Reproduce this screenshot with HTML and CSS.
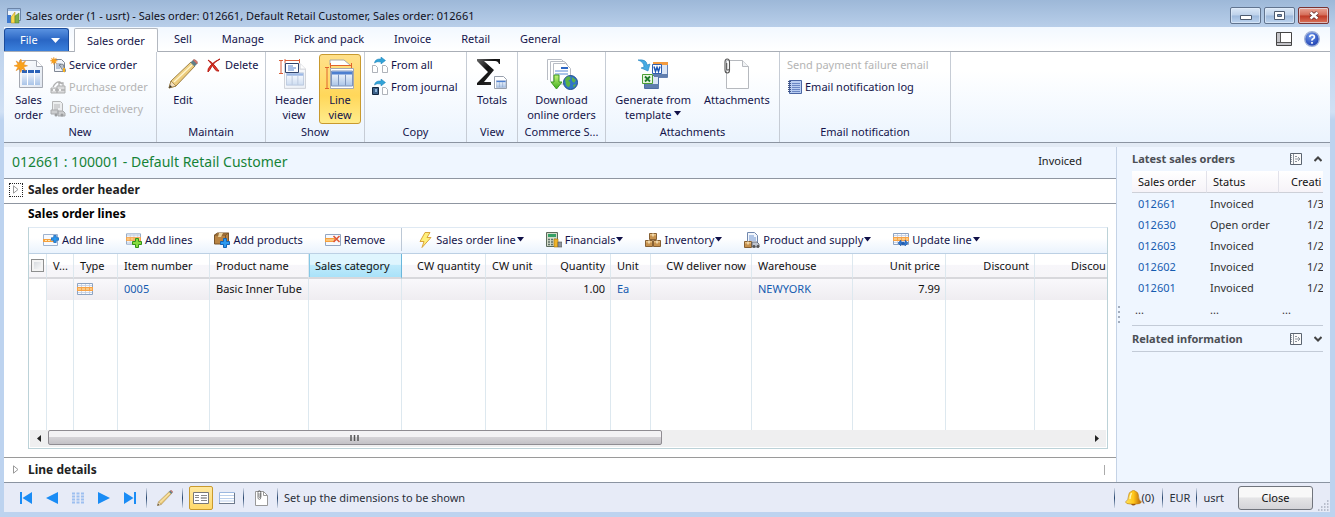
FILE: index.html
```html
<!DOCTYPE html>
<html lang="en">
<head>
<meta charset="utf-8">
<title>Sales order</title>
<link rel="stylesheet" href="styles.css">
</head>
<body>
<svg class="defs" aria-hidden="true">
  <defs>
    <linearGradient id="g-sheet" x1="0" y1="0" x2="1" y2="1"><stop offset="0" stop-color="#fff"/><stop offset="1" stop-color="#dfe6f0"/></linearGradient>
    <linearGradient id="g-cell" x1="0" y1="0" x2="0" y2="1"><stop offset="0" stop-color="#fff"/><stop offset="1" stop-color="#a9c4e8"/></linearGradient>
    <linearGradient id="g-pencil" x1="0" y1="0" x2="1" y2="1"><stop offset="0" stop-color="#fdf0b4"/><stop offset="1" stop-color="#dfae50"/></linearGradient>
    <linearGradient id="g-green" x1="0" y1="0" x2="0" y2="1"><stop offset="0" stop-color="#c4f47a"/><stop offset="1" stop-color="#3fae1d"/></linearGradient>
    <radialGradient id="g-help" cx=".4" cy=".3" r=".8"><stop offset="0" stop-color="#6f98ec"/><stop offset="1" stop-color="#1233a8"/></radialGradient>
    <linearGradient id="g-bell" x1="0" y1="0" x2="1" y2="0"><stop offset="0" stop-color="#ffe45a"/><stop offset=".5" stop-color="#ffc61a"/><stop offset="1" stop-color="#b45f0a"/></linearGradient>
    <linearGradient id="g-sigma" x1="0" y1="0" x2="1" y2="1"><stop offset="0" stop-color="#666"/><stop offset=".4" stop-color="#111"/><stop offset="1" stop-color="#333"/></linearGradient>
    <path id="star" d="M8 0l1.400 4.600L13.600 2.300 11.400 6.500 16 8l-4.600 1.500 2.200 4.200-4.200-2.300L8 16l-1.400-4.600-4.200 2.300 2.200-4.200L0 8l4.600-1.500L2.400 2.300l4.200 2.300z" fill="#f9a21b" stroke="#e27d0c" stroke-width=".5"/>
    <symbol id="i-sheet" viewBox="0 0 24 28">
      <path d="M.5.5h17l6 6v21H.5z" fill="url(#g-sheet)" stroke="#a5a9b2"/>
      <path d="M17.500.5v6h6" fill="#fff" stroke="#a5a9b2"/>
    </symbol>
    <symbol id="i-grid" viewBox="0 0 22 16">
      <path d="M.5.5h21v15H.5z" fill="url(#g-cell)" stroke="#7e95bd"/>
      <path d="M1 1h20v3H1z" fill="#4d7fd0"/><path d="M7.500 4v11M14.500 4v11" stroke="#7e95bd"/>
    </symbol>
    <symbol id="i-pencil" viewBox="0 0 30 30">
      <path d="M1 29l2-7L23 3l4 4L8 27z" fill="url(#g-pencil)" stroke="#8a6a2a" stroke-width=".8"/>
      <path d="M6 23L24 6" stroke="#fff6d2" stroke-width="1.200"/>
      <path d="M1 29l2-7 5 5z" fill="#f2dfbd" stroke="#8a6a2a" stroke-width=".6"/><path d="M1 29l1-3 2 2z" fill="#333"/>
      <path d="M22.500 3.500L25 1l4 4-2.500 2.500z" fill="#5f7f88"/><path d="M25 1q1-1 2.500 0L29 2.500Q30 4 29 5z" fill="#d8766b" stroke="#8c4a45" stroke-width=".5"/>
    </symbol>
    <symbol id="i-rows" viewBox="0 0 16 12">
      <path d="M.5.5h15v11H.5z" fill="#f8fafd" stroke="#8ca3c2"/>
      <path d="M4.500 1v10M8.500 1v10M12.500 1v10M1 2.500h14M1 9.500h14" stroke="#c0ccdf" stroke-width=".8"/>
      <path d="M0 4h16v4H0z" fill="#f7a348"/><path d="M1 6h14" stroke="#fff0c0" stroke-dasharray="3 1"/>
    </symbol>
    <symbol id="i-plus" viewBox="0 0 10 10"><path d="M3.500.5h3v3h3v3h-3v3h-3v-3h-3v-3h3z" fill="#2b9af0" stroke="#1663b5"/></symbol>
    <symbol id="i-box" viewBox="0 0 8 7"><path d="M.5.5h7v6h-7z" fill="#c6924f" stroke="#876033"/><path d="M1 1h6v1.500H1z" fill="#e8c083"/><path d="M4 .5v3" stroke="#f4e1b9" stroke-width="1.500"/></symbol>
    <symbol id="i-clip" viewBox="0 0 7 16"><path d="M5.500 4v8q0 3-2.200 3T1 12V4q0-3 2.200-3 2.300 0 2.300 3v6.500q0 1.500-1.500 1.500T2.700 10.500V5" fill="none" stroke="#555" stroke-width="1.100"/></symbol>
    <symbol id="i-note" viewBox="0 0 12 12"><path d="M.5.500h11v11H.500z" fill="#fbfbfb" stroke="#5b6470"/><path d="M3.500 1v10" stroke="#8b929b"/><path d="M1.500 2v8" stroke="#9aa4b0" stroke-dasharray="1 1"/><path d="M5 6h4M8 4l2 2-2 2M5 3.500h2M5 8.500h2" fill="none" stroke="#8b929b"/></symbol>
    <symbol id="i-copyarrow" viewBox="0 0 12 7"><path d="M.5 6Q1 1.500 7 2V0l4.500 3.500L7 7V5Q3 4 .5 6z" fill="#31a3d8" stroke="#1d7fb4" stroke-width=".5"/></symbol>
    <symbol id="i-page" viewBox="0 0 6 8"><path d="M.5.500h3l2 2v5h-5z" fill="#fff" stroke="#9aa0a8" stroke-width=".8"/></symbol>
    <symbol id="i-down" viewBox="0 0 7 5"><path d="M0 0h7L3.500 4.500z" fill="#101048"/></symbol>
  </defs>
</svg>

<div class="window">
  <header class="titlebar">
    <svg class="appicon" width="16" height="16" viewBox="0 0 16 16"><path d="M1.500.500h13v12h-13z" fill="#eef4fb" stroke="#6b84a8"/><path d="M2 1h12v2H2z" fill="#9cbce4"/><path d="M1 7h4v8H1z" fill="#3c78cf"/><path d="M5 9l4-5v11H5z" fill="#f9d84e" stroke="#a8841a" stroke-width=".5"/><path d="M9 8l4-3v10H9z" fill="#7fb04a" stroke="#4c7a2a" stroke-width=".5"/></svg>
    <h1 class="caption">Sales order (1 - usrt) - Sales order: 012661, Default Retail Customer, Sales order: 012661</h1>
    <div class="winbtns">
      <button class="winbtn" aria-label="Minimize"><svg width="12" height="9" viewBox="0 0 12 9"><path d="M.500 4.500h11v4H.500z" fill="#fff" stroke="#4d5b70"/></svg></button>
      <button class="winbtn" aria-label="Maximize"><svg width="11" height="9" viewBox="0 0 11 9"><path d="M.500.500h10v8H.500z" fill="#fff" stroke="#4d5b70"/><path d="M3.500 3.500h4v2h-4z" fill="#7e9cc4" stroke="#4d5b70"/></svg></button>
      <button class="winbtn winbtn-close" aria-label="Close window"><svg width="12" height="9" viewBox="0 0 12 9"><path d="M2.500 1.500l7 6M9.500 1.500l-7 6" stroke="#5c2a2a" stroke-width="4"/><path d="M2.500 1.500l7 6M9.500 1.500l-7 6" stroke="#fff" stroke-width="2.400"/></svg></button>
    </div>
  </header>

  <nav class="tabs">
    <button class="file">File<svg width="9" height="5" viewBox="0 0 9 5"><path d="M0 0h9L4.500 5z" fill="#fff"/></svg></button>
    <button class="tab tab-on">Sales order</button>
    <button class="tab">Sell</button>
    <button class="tab">Manage</button>
    <button class="tab">Pick and pack</button>
    <button class="tab">Invoice</button>
    <button class="tab">Retail</button>
    <button class="tab">General</button>
    <div class="tabtools">
      <button class="plain" aria-label="View layout"><svg width="16" height="14" viewBox="0 0 16 14"><path d="M.500.500h15v13H.500z" fill="#fff" stroke="#444"/><path d="M1 1h3v9H1zM1 10h14v3H1z" fill="#c3c3c8"/><path d="M4.500 1v9M1 10.500h14" stroke="#555"/></svg></button>
      <button class="plain" aria-label="Help"><svg width="16" height="16" viewBox="0 0 16 16"><circle cx="8" cy="8" r="7.300" fill="url(#g-help)" stroke="#9fb0d8" stroke-width="1.400"/><path d="M5.700 6.200Q5.900 4 8.100 4t2.300 2q0 1.200-1.300 1.800T8 9.600M8 11v1.700" fill="none" stroke="#fff" stroke-width="1.700"/></svg></button>
    </div>
  </nav>

  <div class="ribbon">
    <section class="group g-new">
      <div class="tools">
        <button class="big big-narrow"><svg width="30" height="32" viewBox="0 0 30 32"><use href="#i-sheet" x="5" y="1" width="24" height="30"/><path d="M8 12h18v15H8z" fill="url(#g-cell)"/><path d="M8 12h18v3H8z" fill="#2a62b8"/><path d="M13.500 12v15M20.500 12v15" stroke="#fff"/><use href="#star" transform="translate(0 1) scale(.85)"/></svg>Sales<br>order</button>
        <div class="stack">
          <button class="small"><svg width="16" height="16" viewBox="0 0 16 16"><path d="M4.500 2.500h7l3 3v9h-10z" fill="#f2f5fa" stroke="#7f8794"/><path d="M6 7h5M6 9h5M6 11h4" stroke="#7d91b5"/><path d="M9 8q2 1 2 3l3 4 2-1-2-4q0-3-2-3z" fill="#b9c0c9" stroke="#5c6470" stroke-width=".7"/><path d="M13 11v4h2v-4z" fill="#f3ae20"/><use href="#star" transform="scale(.48)"/></svg>Service order</button>
          <button class="small" disabled><svg width="16" height="16" viewBox="0 0 16 16"><path d="M1 9h6v5H1zM7 7h8v7H7z" fill="#cdcdcd" stroke="#8f8f8f"/><path d="M3 8q3-6 7-5l2 2M9 7V4h4v3M1 11h14" fill="none" stroke="#8f8f8f" stroke-width="1.300"/><path d="M4 10v2M10 10v2" stroke="#f4f4f4" stroke-width="2"/></svg>Purchase order</button>
          <button class="small" disabled><svg width="16" height="16" viewBox="0 0 16 16"><path d="M2.500.500h8l2 2v10h-10z" fill="#e9e9e9" stroke="#999"/><path d="M4 4h6M4 6h6M4 8h4" stroke="#999"/><path d="M1 9h7v4H1zM8 10h5l2 2v3H8z" fill="#bcbcbc" stroke="#888"/><circle cx="6" cy="14" r="1.500" fill="#777"/><circle cx="12" cy="14" r="1.500" fill="#777"/></svg>Direct delivery</button>
        </div>
      </div>
      <h2 class="glabel">New</h2>
    </section>
    <section class="group g-maintain">
      <div class="tools">
        <button class="big big-edit"><svg width="32" height="32" viewBox="0 0 32 32"><use href="#i-pencil" x="1" y="1" width="30" height="30"/></svg>Edit</button>
        <div class="stack">
          <button class="small"><svg width="16" height="16" viewBox="0 0 16 16"><path d="M2 3q4 2 7 6t4 5q-3 1-5-3T2 3zM14 2Q8 5 6 9t-4 6q-1-3 3-7t9-6z" fill="#e23a2c" stroke="#b91f16" stroke-width="1"/></svg>Delete</button>
        </div>
      </div>
      <h2 class="glabel">Maintain</h2>
    </section>
    <section class="group g-show">
      <div class="tools">
        <button class="big big-mid"><svg width="32" height="32" viewBox="0 0 32 32"><g opacity=".55"><use href="#i-sheet" x="6" y="5" width="22" height="26"/><use href="#i-grid" x="8" y="14" width="18" height="14"/></g><path d="M7.500 5.500h13v9h-13z" fill="#fff" stroke="#31446b"/><path d="M10 8h5M10 10h8M10 12h6" stroke="#5583cf"/><path d="M3 2v14M1 2.500h4M1 15.500h4M7 2.500h15M21.500 1v4M7 1v4" stroke="#d9613b"/></svg>Header<br>view</button>
        <button class="big big-on"><svg width="32" height="32" viewBox="0 0 32 32"><path d="M6 7V2h14l6 5" fill="#fff" stroke="#a9a9a9"/><path d="M6.500 10.500h23v20h-23z" fill="#fff" stroke="#a5a9b2"/><use href="#i-grid" x="7" y="12" width="22" height="17"/><path d="M3 9v22M1 9.500h4M1 30.500h4M6 7.500h22M6.500 5v5M27.500 5v5" stroke="#e0642d"/></svg>Line<br>view</button>
      </div>
      <h2 class="glabel">Show</h2>
    </section>
    <section class="group g-copy">
      <div class="tools">
        <div class="stack">
          <button class="small"><svg width="16" height="16" viewBox="0 0 16 16"><use href="#i-copyarrow" x="2" y="0" width="12" height="7"/><use href="#i-page" x="0" y="8" width="6" height="8"/><use href="#i-page" x="10" y="8" width="6" height="8"/></svg>From all</button>
          <button class="small"><svg width="16" height="16" viewBox="0 0 16 16"><use href="#i-copyarrow" x="2" y="0" width="12" height="7"/><path d="M.500 8.500h6v7h-6z" fill="#3d6189" stroke="#12263f"/><path d="M3 10h2v3H3z" fill="#8eb4d8"/><use href="#i-page" x="10" y="8" width="6" height="8"/></svg>From journal</button>
        </div>
      </div>
      <h2 class="glabel">Copy</h2>
    </section>
    <section class="group g-view">
      <div class="tools">
        <button class="big big-mid"><svg width="32" height="32" viewBox="0 0 32 32"><path d="M1 1h23v5h-1q-1-3-4-3H8l10 9L8 24h7v3H1v-2L12 14 1 3z" fill="url(#g-sigma)"/><path d="M18.500 18.500h9l3 3v9h-12z" fill="#fff" stroke="#98a0ad"/><use href="#i-grid" x="20" y="22" width="10" height="8"/></svg>Totals</button>
      </div>
      <h2 class="glabel">View</h2>
    </section>
    <section class="group g-commerce">
      <div class="tools">
        <button class="big"><svg width="32" height="32" viewBox="0 0 32 32"><path d="M1.500 22V1.500h14l3 3M4.500 24V3.500h14l3 3M7.500 26V5.500h12l5 5V26z" fill="#fff" stroke="#b8bcc4"/><path d="M9 13h13M9 16h13" stroke="#5b8ad6"/><path d="M15 9h7v2h-7z" fill="#2c66c4"/><path d="M8 17h5v7h3l-5.500 7L5 24h3z" fill="url(#g-green)" stroke="#3e9a22"/><circle cx="24.500" cy="24.500" r="7" fill="#3175c6" stroke="#1f4d8c"/><path d="M19 21q3-4 5-2t-2 4q3 0 2 4t-4 0zM26 19l4 3-2 3-2-2zM27 27l3-1-2 4z" fill="#5bb347"/></svg>Download<br>online orders</button>
      </div>
      <h2 class="glabel">Commerce S...</h2>
    </section>
    <section class="group g-attach">
      <div class="tools">
        <button class="big"><svg width="32" height="32" viewBox="0 0 32 32"><path d="M1 2q9-1 9 5l3-1-2 7-7-3 3-1Q7 4 1 2z" fill="#45aae2" stroke="#2382bd" stroke-width=".6"/><path d="M16.500 5.500h14v14h-14z" fill="#dbe6f6" stroke="#6682b3"/><path d="M16 4h15v3H16z" fill="#f39a3d"/><path d="M7.500 17.500h14v13h-14z" fill="#dbe6f6" stroke="#4e6da4"/><path d="M8 26h14v4H8zM17 16h14v3H17z" fill="#607eae"/><path d="M15.500 6.500h9v9h-9z" fill="#fff" stroke="#315fae"/><path d="M17 8.500l1.500 5 1.500-4 1.500 4 1.500-5" fill="none" stroke="#1b55b5" stroke-width="1.500"/><path d="M5.500 16.500h10v9h-10z" fill="#e9f7df" stroke="#4d9f35"/><path d="M8 18.500l5 5M13 18.500l-5 5" stroke="#207b2d" stroke-width="1.800"/></svg>Generate from<br><span>template <svg class="caret" width="7" height="5"><use href="#i-down"/></svg></span></button>
        <button class="big"><svg width="32" height="32" viewBox="0 0 32 32"><path d="M5.500 2.500h16l6 6v22h-22z" fill="#fff" stroke="#b6b9be"/><path d="M21.500 2.500v6h6" fill="#f1f3f5" stroke="#b6b9be"/><use href="#i-clip" x="3" y="0" width="7" height="16"/></svg>Attachments</button>
      </div>
      <h2 class="glabel">Attachments</h2>
    </section>
    <section class="group g-email">
      <div class="tools">
        <div class="stack">
          <button class="small" disabled>Send payment failure email</button>
          <button class="small"><svg width="15" height="16" viewBox="0 0 15 16"><path d="M2.500 1.500h12v13h-12z" fill="#b9cdf1" stroke="#4b66a5"/><path d="M5 4.500h8M5 6.500h8M5 8.500h8M5 10.500h8M5 12.500h8" stroke="#6b87c4"/><path d="M2.500 2v12" stroke="#3e5385" stroke-width="3" stroke-dasharray="1 1"/></svg>Email notification log</button>
        </div>
      </div>
      <h2 class="glabel">Email notification</h2>
    </section>
  </div>

  <div class="body">
    <main class="main">
      <div class="record">
        <h2 class="recname">012661 : 100001 - Default Retail Customer</h2>
        <span class="recstatus">Invoiced</span>
      </div>
      <button class="fasttab"><span class="twist twist-focus"><svg width="6" height="9" viewBox="0 0 6 9"><path d="M.500.800v7.400L5 4.500z" fill="#fff" stroke="#999"/></svg></span>Sales order header</button>
      <h3 class="linestitle">Sales order lines</h3>
      <div class="grid">
        <div class="gridbar">
          <button class="gb"><svg width="16" height="14" viewBox="0 0 16 14"><path d="M.500 1.500h14v11H.500z" fill="#f6f9fe" stroke="#9db2cf"/><path d="M0 6h12v3H0z" fill="#f6a13d"/><path d="M2 7.500h8" stroke="#ffe9b8" stroke-dasharray="2 1"/><use href="#i-plus" x="8" y="2" width="8" height="8"/></svg>Add line</button>
          <button class="gb"><svg width="16" height="16" viewBox="0 0 16 16"><use href="#i-rows" x="0" y="1" width="15" height="12"/><path d="M9.500 6.500h3v3h3v3h-3v3h-3v-3h-3v-3h3z" fill="#86dc3f" stroke="#329318"/></svg>Add lines</button>
          <button class="gb"><svg width="16" height="16" viewBox="0 0 16 16"><path d="M.500 3l3-2h11v9l-3 2h-11z" fill="#b98443" stroke="#79552b"/><path d="M.500 3h11l3-2M11.500 3v8" fill="none" stroke="#79552b"/><path d="M5 1l-1 4h3l2-4z" fill="#ecd3a0"/><use href="#i-plus" x="6" y="6" width="10" height="10"/></svg>Add products</button>
          <button class="gb"><svg width="16" height="14" viewBox="0 0 16 14"><path d="M.500 1.500h15v11H.500z" fill="#f6f9fe" stroke="#93a6c2"/><path d="M0 5h10v4H0z" fill="#f6a13d"/><path d="M1 7h8" stroke="#ffe9b8"/><path d="M8.500 3l6 6M14.500 3l-6 6" stroke="#df5638" stroke-width="1.600"/></svg>Remove</button>
          <span class="gbsep"></span>
          <button class="gb"><svg width="15" height="16" viewBox="0 0 15 16"><path d="M7 .500h5L9 5.500h4L4 15.500l2-6H2z" fill="#fff07a" stroke="#d9a53c"/></svg>Sales order line<svg class="caret" width="7" height="5"><use href="#i-down"/></svg></button>
          <button class="gb"><svg width="16" height="16" viewBox="0 0 16 16"><path d="M.500.500h11v14H.500z" fill="#d3dbc9" stroke="#5c6b5c"/><path d="M2 2h8v3H2z" fill="#35a066"/><path d="M2 7.500h8M2 10h8M2 12.500h6" stroke="#5f6f68" stroke-width="1.500" stroke-dasharray="2 1"/><path d="M8 7h4v8H8z" fill="#f0b429" stroke="#9c6e10" stroke-width=".6"/><path d="M12 10h4v5h-4z" fill="#8d949d" stroke="#555" stroke-width=".6"/></svg>Financials<svg class="caret" width="7" height="5"><use href="#i-down"/></svg></button>
          <button class="gb"><svg width="16" height="16" viewBox="0 0 16 16"><use href="#i-box" x="4" y="1" width="8" height="7"/><use href="#i-box" x="0" y="8" width="8" height="7"/><use href="#i-box" x="8" y="8" width="8" height="7"/></svg>Inventory<svg class="caret" width="7" height="5"><use href="#i-down"/></svg></button>
          <button class="gb"><svg width="16" height="16" viewBox="0 0 16 16"><path d="M3.500.500h7l3 3v9h-10z" fill="#f2f6fc" stroke="#7188ae"/><path d="M5 4h5M5 6h7M5 8h7" stroke="#6f94cf"/><use href="#i-box" x="0" y="9" width="8" height="7"/><path d="M8 10h5l2 2v3H8z" fill="#bfc5cf" stroke="#5b6370" stroke-width=".8"/><circle cx="10" cy="14.500" r="1.400" fill="#555"/><circle cx="14" cy="14.500" r="1.400" fill="#555"/></svg>Product and supply<svg class="caret" width="7" height="5"><use href="#i-down"/></svg></button>
          <button class="gb"><svg width="16" height="14" viewBox="0 0 16 14"><use href="#i-rows" x="0" y="0" width="16" height="12"/><path d="M5 10l3-3v2h3v2H8v2zM15 10l-3 3v-1H9v-2h3V7z" fill="#2f77cf" stroke="#1c4f98" stroke-width=".5"/></svg>Update line<svg class="caret" width="7" height="5"><use href="#i-down"/></svg></button>
        </div>
        <div class="gridview">
          <table class="lines">
            <colgroup><col class="c-check"><col class="c-v"><col class="c-type"><col class="c-item"><col class="c-name"><col class="c-cat"><col class="c-cwq"><col class="c-cwu"><col class="c-qty"><col class="c-unit"><col class="c-cwd"><col class="c-wh"><col class="c-price"><col class="c-disc"><col class="c-last"></colgroup>
            <thead>
              <tr><th class="ctr"><input type="checkbox" class="check" aria-label="Select all lines"></th><th>V...</th><th>Type</th><th>Item number</th><th>Product name</th><th class="hot">Sales category</th><th class="num">CW quantity</th><th>CW unit</th><th class="num">Quantity</th><th>Unit</th><th class="num">CW deliver now</th><th>Warehouse</th><th class="num">Unit price</th><th class="num">Discount</th><th class="cut">Discou</th></tr>
            </thead>
            <tbody>
              <tr class="line"><td class="blank"></td><td></td><td class="typecell"><svg width="16" height="12"><use href="#i-rows"/></svg></td><td><a href="#item">0005</a></td><td>Basic Inner Tube</td><td></td><td></td><td></td><td class="num">1.00</td><td><a href="#unit">Ea</a></td><td></td><td><a href="#warehouse">NEWYORK</a></td><td class="num">7.99</td><td></td><td></td></tr>
              <tr class="rest"><td></td><td></td><td></td><td></td><td></td><td></td><td></td><td></td><td></td><td></td><td></td><td></td><td></td><td></td><td></td></tr>
            </tbody>
          </table>
        </div>
        <div class="scroll">
          <button class="scrollbtn" aria-label="Scroll left"><svg width="4" height="7" viewBox="0 0 4 7"><path d="M4 0v7L0 3.500z" fill="#222"/></svg></button>
          <div class="track"><div class="thumb"><svg width="9" height="6" viewBox="0 0 9 6"><path d="M1 0v6M4.500 0v6M8 0v6" stroke="#555" stroke-width="1.500"/></svg></div></div>
          <button class="scrollbtn" aria-label="Scroll right"><svg width="4" height="7" viewBox="0 0 4 7"><path d="M0 0v7l4-3.500z" fill="#222"/></svg></button>
        </div>
      </div>
      <button class="fasttab fasttab-last"><span class="twist"><svg width="6" height="9" viewBox="0 0 6 9"><path d="M.500.800v7.400L5 4.500z" fill="#fff" stroke="#999"/></svg></span>Line details<span class="tick"></span></button>
    </main>

    <aside class="side">
      <div class="splitter"><svg width="2" height="17" viewBox="0 0 2 17"><path d="M0 0h2v2H0zM0 5h2v2H0zM0 10h2v2H0zM0 15h2v2H0z" fill="#a3adbd"/></svg></div>
      <div class="facts">
        <div class="facthead"><h3>Latest sales orders</h3><button class="plain" aria-label="Open in list"><svg width="12" height="12"><use href="#i-note"/></svg></button><button class="plain" aria-label="Collapse"><svg width="8" height="6" viewBox="0 0 8 6"><path d="M.500 5L4 1.500 7.500 5" fill="none" stroke="#444" stroke-width="2"/></svg></button></div>
        <table class="latest">
          <colgroup><col class="f-so"><col class="f-st"><col></colgroup>
          <thead><tr><th>Sales order</th><th>Status</th><th>Creati</th></tr></thead>
          <tbody>
            <tr><td><a href="#012661">012661</a></td><td>Invoiced</td><td>1/3</td></tr>
            <tr><td><a href="#012630">012630</a></td><td>Open order</td><td>1/2</td></tr>
            <tr><td><a href="#012603">012603</a></td><td>Invoiced</td><td>1/2</td></tr>
            <tr><td><a href="#012602">012602</a></td><td>Invoiced</td><td>1/2</td></tr>
            <tr><td><a href="#012601">012601</a></td><td>Invoiced</td><td>1/2</td></tr>
            <tr class="more"><td>...</td><td>...</td><td>...</td></tr>
          </tbody>
        </table>
        <div class="facthead facthead-closed"><h3>Related information</h3><button class="plain" aria-label="Open related information"><svg width="12" height="12"><use href="#i-note"/></svg></button><button class="plain" aria-label="Expand"><svg width="8" height="6" viewBox="0 0 8 6"><path d="M.500 1L4 4.500 7.500 1" fill="none" stroke="#444" stroke-width="2"/></svg></button></div>
      </div>
    </aside>
  </div>

  <footer class="status">
    <div class="nav">
      <button class="plain" aria-label="First"><svg width="12" height="12" viewBox="0 0 12 12"><path d="M0 0h2v12H0zM12 0v12L2.500 6z" fill="#1a8cf5"/></svg></button>
      <button class="plain" aria-label="Previous"><svg width="12" height="12" viewBox="0 0 12 12"><path d="M12 0v12L0 6z" fill="#1a8cf5"/></svg></button>
      <button class="plain" aria-label="Grid"><svg width="12" height="12" viewBox="0 0 12 12"><path d="M0 1.500h12M0 4.500h12M0 7.500h12M0 10.500h12" stroke="#9dbff0" stroke-width="2" stroke-dasharray="3 1.500"/></svg></button>
      <button class="plain" aria-label="Next"><svg width="12" height="12" viewBox="0 0 12 12"><path d="M0 0v12l12-6z" fill="#1a8cf5"/></svg></button>
      <button class="plain" aria-label="Last"><svg width="12" height="12" viewBox="0 0 12 12"><path d="M10 0h2v12h-2zM0 0v12l9.500-6z" fill="#1a8cf5"/></svg></button>
    </div>
    <span class="sep"></span>
    <button class="plain cell" aria-label="Edit record"><svg width="16" height="16"><use href="#i-pencil"/></svg></button>
    <span class="sep"></span>
    <button class="viewbtn viewbtn-on" aria-label="Form view"><svg width="16" height="12" viewBox="0 0 16 12"><path d="M.500.500h15v11H.500z" fill="#fff" stroke="#777"/><path d="M2 3.500h4M2 5.500h4M2 8.500h4M8 3.500h6M8 8.500h6" stroke="#888"/><path d="M8 5.500h5.500v1H8z" fill="#fff" stroke="#888" stroke-width=".7"/></svg></button>
    <button class="viewbtn" aria-label="Grid view"><svg width="16" height="12" viewBox="0 0 16 12"><path d="M.500.500h15v11H.500z" fill="#fff" stroke="#9cb8df"/><path d="M1 3.500h14M1 6.500h14M1 9h14" stroke="#bcd0ec"/><path d="M0 11.500h16M15.500 1v11" stroke="#6d7a8c"/></svg></button>
    <span class="sep"></span>
    <button class="plain cell" aria-label="Attachments"><svg width="14" height="16" viewBox="0 0 14 16"><path d="M1.500 1.500h8l4 4v10h-12z" fill="#fff" stroke="#999"/><path d="M9.500 1.500v4h4" fill="none" stroke="#999"/><use href="#i-clip" x="3" y="0" width="5" height="10"/></svg></button>
    <span class="sep"></span>
    <span class="hint">Set up the dimensions to be shown</span>
    <span class="sep"></span>
    <button class="plain alerts"><svg width="17" height="16" viewBox="0 0 17 16"><path d="M7 1q1.500-1.500 3 0 3.500 1 3.500 5t3 6q-1 2-5 2H5q-4 0-4.500-2 3-2 3-6T7 1z" fill="url(#g-bell)" stroke="#b87a12" stroke-width=".6"/><path d="M6 14q2 3 5 0z" fill="#9b5410"/><path d="M6.500 3Q5 6 5 9" stroke="#fff7b8" fill="none" stroke-width="1.300"/></svg>(0)</button>
    <span class="sep"></span>
    <span class="info">EUR</span>
    <span class="sep"></span>
    <span class="info">usrt</span>
    <button class="close">Close</button>
    <svg class="grip" width="12" height="12" viewBox="0 0 12 12"><path d="M9 1h1.500M6 4h1.500M9 4h1.500M3 7h1.500M6 7h1.500M9 7h1.500M0 10h1.500M3 10h1.500M6 10h1.500M9 10h1.500" stroke="#a9b0bf" stroke-width="1.500"/></svg>
  </footer>
</div>
</body>
</html>
```
FILE: styles.css
```css
* { box-sizing: border-box; }
body {
  margin: 0;
  font: 11px/14px "Noto Sans", "Open Sans", sans-serif;
  color: #111;
}
.defs { position: absolute; width: 0; height: 0; }
h1, h2, h3 { margin: 0; font-size: 11px; font-weight: 400; }
button { font: inherit; color: inherit; background: none; border: 0; padding: 0; margin: 0; white-space: nowrap; }
svg { display: block; flex: none; }
a { color: #165cb0; text-decoration: none; }

.window {
  display: flex;
  flex-direction: column;
  min-height: 100vh;
  padding: 0 5px 5px 4px;
  background: linear-gradient(#9db8d8 0, #b9cfea 28px, #d0e0f4 112px, #bdd3ef 120px);
}
.titlebar { display: flex; align-items: center; height: 27px; padding: 4px 0 0 2px; gap: 4px; }
.caption { flex: 1; color: #10101c; }
.winbtns { display: flex; gap: 3px; padding-right: 1px; }
.winbtn {
  display: flex; align-items: center; justify-content: center;
  width: 31px; height: 17px;
  border: 1px solid #61748f; border-radius: 2px;
  background: linear-gradient(#dbe8f7 0, #bdd1ea 48%, #9db9dc 52%, #bdd4ef 100%);
  box-shadow: inset 0 0 0 1px #e3eefb99;
}
.winbtn-close { border-color: #7a3434; background: linear-gradient(#e8a597 0, #d56c57 48%, #c03a26 52%, #d9725a 100%); }

.tabs { display: flex; align-items: flex-end; height: 25px; background: linear-gradient(#f2f8ff, #fff); border-bottom: 1px solid #a9aeb6; color: #14144a; }
.file {
  display: flex; align-items: center; gap: 13px;
  height: 23px; width: 65px; padding-left: 15px; margin-right: 5px;
  color: #fff; background: linear-gradient(#5a92e0, #2a66c4 50%, #3a80dc);
  border: 1px solid #1b4c9c; border-bottom: 0; border-radius: 3px 3px 0 0;
}
.tab { height: 24px; padding: 0 15px; }
.tab-on { margin-bottom: -1px; padding: 0 12px; background: #fff; border: 1px solid #b3b8c0; border-bottom: 0; border-radius: 2px 2px 0 0; margin-right: 1px; }
.tabtools { display: flex; align-items: center; align-self: center; gap: 12px; margin-left: auto; padding-right: 10px; }

.ribbon { display: flex; height: 91px; background: linear-gradient(#fff 20%, #ebf4fe); border-bottom: 1px solid #8b94a1; color: #14144a; }
.group { display: flex; flex-direction: column; flex: none; border-right: 1px solid #c6ccd5; }
.g-new { width: 153px; }
.g-maintain { width: 109px; }
.g-show { width: 99px; }
.g-copy { width: 102px; }
.g-view { width: 51px; }
.g-commerce { width: 88px; }
.g-attach { width: 174px; }
.g-email { width: 171px; }
.tools { display: flex; flex: 1; padding: 2px 3px 0; }
.g-commerce .tools, .g-view .tools { justify-content: center; }
.g-show .tools { padding-left: 6px; }
.g-attach .tools { justify-content: center; gap: 11px; }
.glabel { text-align: center; height: 17px; }
.big { display: flex; flex-direction: column; align-items: center; height: 70px; padding-top: 3px; line-height: 15px; border: 1px solid transparent; border-radius: 3px; text-align: center; }
.big svg:first-child { margin-bottom: 2px; }
.big-narrow { width: 43px; }
.big-mid { width: 44px; }
.big-edit { width: 46px; }
.big-on { width: 42px; margin-left: 3px; border-color: #c99a2e; background: linear-gradient(#ffe08a, #ffd75a 60%, #ffec8c); }
.stack { display: flex; flex-direction: column; }
.g-email .stack, .g-copy .stack { padding-left: 4px; }
.small { display: flex; align-items: center; gap: 3px; height: 22px; }
.small:disabled { color: #b4b4b4; }
.small:disabled svg { opacity: .7; }
.caret { display: inline-block; vertical-align: 1px; }

.body { display: flex; flex: 1; border-top: 4px solid #e3ebf5; border-bottom: 1px solid #8b94a1; }
.main { display: flex; flex-direction: column; flex: 1; min-width: 0; background: #fff; border-right: 1px solid #c5d3e6; }
.record { display: flex; align-items: center; justify-content: space-between; height: 32px; padding: 0 34px 2px 8px; background: #eff6ff; border-bottom: 1px solid #8f96a1; }
.recname { font-size: 14px; color: #168338; }
.recstatus { color: #222; padding-bottom: 2px; }
.fasttab { display: flex; align-items: center; height: 25px; padding: 0 11px 3px 5px; gap: 6px; font-size: 12px; font-weight: 700; color: #222; border-bottom: 1px solid #8f96a1; }
.twist { display: flex; align-items: center; justify-content: center; width: 14px; height: 14px; border: 1px solid transparent; margin-right: -1px; }
.twist-focus { border: 1px dotted #222; }
.linestitle { height: 23px; padding: 3px 0 0 24px; font-size: 12px; font-weight: 700; color: #000; }
.fasttab-last { height: 25px; margin-top: 8px; padding-bottom: 1px; border-top: 1px solid #9a9a9a; border-bottom: 0; }
.tick { width: 1px; height: 10px; margin-left: auto; background: #aaa; }

.grid { display: flex; flex-direction: column; flex: 1; margin: 0 8px 0 24px; border: 1px solid #bcd2d8; border-top-color: #dfe9f3; }
.gridbar { display: flex; align-items: center; gap: 22px; height: 26px; padding: 0 0 2px 14px; color: #14144a; background: linear-gradient(#fff 40%, #eaf3fd); border-bottom: 1px solid #bcd0e4; }
.gb { display: flex; align-items: center; gap: 3px; }
.gb .caret { margin-left: -2px; }
.gbsep { width: 1px; height: 23px; margin: 0 -6px; background: #bcc8d6; }
.gridview { display: grid; flex: 1; overflow: hidden; }
.lines { table-layout: fixed; width: 1095px; height: 100%; border-collapse: separate; border-spacing: 0; }
.c-check { width: 18px; } .c-v { width: 27px; } .c-type { width: 44px; } .c-item { width: 92px; } .c-name { width: 99px; }
.c-cat { width: 93px; } .c-cwq { width: 84px; } .c-cwu { width: 61px; } .c-qty { width: 64px; } .c-unit { width: 40px; }
.c-cwd { width: 101px; } .c-wh { width: 101px; } .c-price { width: 93px; } .c-disc { width: 89px; } .c-last { width: 89px; }
.lines th, .lines td { padding: 0 5px 0 6px; border-right: 1px solid #dde8ef; font-weight: 400; text-align: left; white-space: nowrap; }
.lines th { height: 25px; padding-top: 1px; color: #111; background: linear-gradient(#fff 45%, #f7f6fa 50%, #f6f5f8); border-bottom: 2px solid #d8d8dc; }
.lines .hot { background: linear-gradient(#dff5fe 45%, #bfeafb 50%, #a9e2f9); border-right-color: #6bb7dc; box-shadow: inset 1px 0 #86c8e6; }
.lines .ctr { padding: 0; }
.lines .num { text-align: right; }
.lines .cut { padding: 1px 0 0 36px; }
.lines .line td { height: 21px; padding-bottom: 1px; background: linear-gradient(#f9f8fb, #efedf1); }
.lines .line .blank { background: #fff; }
.lines .line .typecell { padding-left: 3px; }
.check { display: block; width: 13px; height: 13px; margin: 0 0 0 2px; appearance: none; border: 1px solid #8e8f8f; background: linear-gradient(135deg, #cfd3d8, #fff); box-shadow: inset 0 0 0 2px #f4f4f4; }
.scroll { display: flex; height: 17px; margin: 0 1px 1px; background: #efeff0; }
.scrollbtn { display: flex; align-items: center; justify-content: center; width: 18px; }
.track { flex: 1; display: flex; }
.thumb { display: flex; align-items: center; justify-content: center; width: 59%; height: 15px; border: 1px solid #8f8c92; border-radius: 2px; background: linear-gradient(#f3f2f4 45%, #d4d2d6 50%, #c3c1c6); }

.side { display: flex; width: 213px; background: #eff6ff; }
.splitter { display: flex; align-items: center; width: 14px; padding-left: 1px; }
.facts { flex: 1; min-width: 0; padding: 0 7px 0 1px; }
.facthead { display: flex; align-items: center; gap: 12px; height: 24px; padding-right: 1px; }
.facthead h3 { flex: 1; font-weight: 700; color: #4c4f55; }
.facthead-closed { height: 27px; border-top: 1px solid #c3cbd7; border-bottom: 1px solid #c3cbd7; }
.latest { table-layout: fixed; width: 100%; border-collapse: separate; border-spacing: 0; color: #333; }
.f-so { width: 75px; } .f-st { width: 72px; }
.latest th, .latest td { height: 21px; padding: 0 0 0 6px; font-weight: 400; text-align: left; white-space: nowrap; overflow: hidden; }
.latest th { height: 22px; color: #111; background: linear-gradient(#fff, #f6f3f8); border-right: 1px solid #e2e2ea; border-bottom: 1px solid #cdd0d8; }
.latest td:nth-child(2) { padding-left: 3px; }
.latest td:nth-child(3) { padding-left: 28px; }
.latest th:nth-child(3) { padding-left: 12px; border-right: 0; }
.latest .more td { height: 27px; padding: 0 0 4px 3px; }

.status { display: flex; align-items: center; height: 29px; padding-left: 16px; background: #e7ebf7; color: #2a2f3a; }
.nav { display: flex; gap: 14px; margin-right: 10px; }
.sep { width: 1px; height: 20px; background: linear-gradient(#d5dcea, #26456e, #d5dcea); }
.cell { padding: 0 9px 0 10px; }
.viewbtn { display: flex; align-items: center; justify-content: center; width: 24px; height: 24px; margin-left: 6px; border: 1px solid transparent; border-radius: 2px; }
.viewbtn + .viewbtn { margin: 0 4px 0 2px; }
.viewbtn-on { border-color: #c99a2e; background: linear-gradient(#ffe9a0, #ffd96a); }
.hint { flex: 1; padding-left: 6px; }
.alerts { display: flex; align-items: center; padding: 0 8px 0 10px; }
.info { padding: 0 6px; }
.close { width: 75px; height: 24px; margin-left: 8px; border: 1px solid #70747c; border-radius: 3px; background: linear-gradient(#f8f8f8 45%, #e4e4e6 50%, #d4d4d8); color: #111; }
.grip { align-self: flex-end; margin-left: 5px; }
```
